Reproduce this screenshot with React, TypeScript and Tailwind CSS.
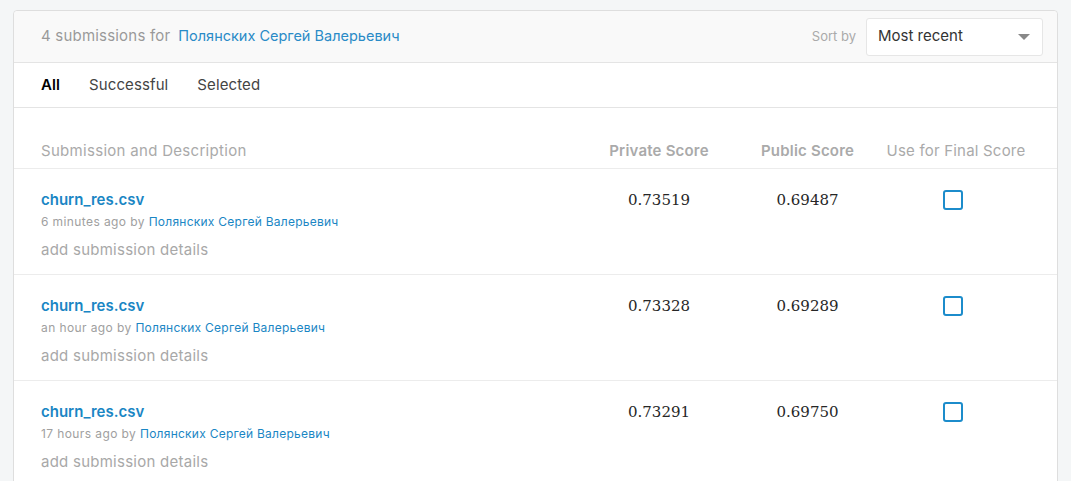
const rows = [
  { when: "6 minutes ago", priv: "0.73519", pub: "0.69487" },
  { when: "an hour ago", priv: "0.73328", pub: "0.69289" },
  { when: "17 hours ago", priv: "0.73291", pub: "0.69750" },
];

const NAME = "Полянских Сергей Валерьевич";

const grid = "grid grid-cols-[543px_150px_147px_150px]";

export default function App() {
  return (
    <div className="min-h-screen bg-[#f4f6f7] pt-[10px] pl-[13px] pr-[13px] font-['Inter',sans-serif]">
      <div className="rounded-t-[4px] border border-[#dedede] bg-white">
        {/* header */}
        <div className="flex h-[52px] items-center justify-between rounded-t-[4px] border-b border-[#e4e4e4] bg-[#f9f9f9] pl-[27px] pr-[14px]">
          <div className="text-[15px] tracking-[0.2px] text-[#999]">
            4 submissions for<span className="ml-[8px] text-[14.5px] tracking-normal text-[#2a8bc7]">{NAME}</span>
          </div>
          <div className="flex items-center gap-[10px]">
            <span className="text-[13px] text-[#aaa]">Sort by</span>
            <div className="flex h-[38px] w-[177px] items-center justify-between rounded-[3px] border border-[#e6e6e6] bg-white pl-[11px] pr-[12px]">
              <span className="text-[15px] text-[#333]">Most recent</span>
              <span className="h-0 w-0 border-x-[6px] border-t-[6px] border-x-transparent border-t-[#888]" />
            </div>
          </div>
        </div>

        {/* tabs */}
        <div className="flex h-[45px] items-center gap-[29px] border-b border-[#e4e4e4] pl-[27px] text-[15px] tracking-[0.1px] text-[#444]">
          <span className="font-semibold text-black">All</span>
          <span>Successful</span>
          <span>Selected</span>
        </div>

        {/* table header */}
        <div className={`${grid} mt-[32px] items-center border-b border-[#ececec] pb-[5px] pl-[27px] text-[15px] tracking-[0.2px]`}>
          <span className="tracking-[0.3px] text-[#aaa]">Submission and Description</span>
          <span className="text-center font-semibold text-[#aaa]">Private Score</span>
          <span className="text-center font-semibold text-[#aaa]">Public Score</span>
          <span className="text-center text-[#aaa]">Use for Final Score</span>
        </div>

        {rows.map((r, i) => (
          <div key={i} className={`${grid} h-[106px] border-b border-[#ececec] pl-[27px] pt-[20px]`}>
            <div>
              <div className="text-[15px] font-semibold leading-[22px] text-[#1a86c4]">churn_res.csv</div>
              <div className="text-[12px] leading-[22px] tracking-[0.4px] text-[#a0a0a0]">
                {r.when} by <span className="tracking-[0.25px] text-[#1a86c4]">{NAME}</span>
              </div>
              <div className="mt-[7px] text-[15px] leading-[20px] tracking-[0.25px] text-[#a8a8a8]">add submission details</div>
            </div>
            <div className="text-center font-['DejaVu_Serif',serif] text-[15px] leading-[22px] text-[#262626]">{r.priv}</div>
            <div className="text-center font-['DejaVu_Serif',serif] text-[15px] leading-[22px] text-[#262626]">{r.pub}</div>
            <div className="flex justify-center pr-[7px] pt-[1px]">
              <span className="block h-[20px] w-[20px] rounded-[3px] border-2 border-[#1c8ccb]" />
            </div>
          </div>
        ))}
      </div>
    </div>
  );
}
